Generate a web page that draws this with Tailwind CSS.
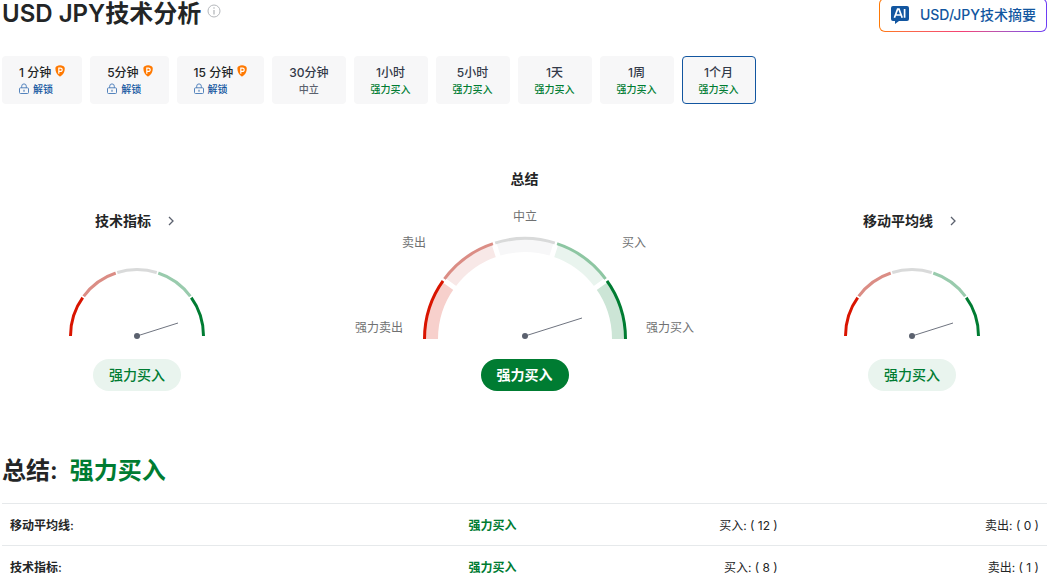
<!DOCTYPE html>
<html lang="zh-CN">
<head>
<meta charset="utf-8">
<meta name="viewport" content="width=device-width, initial-scale=1">
<title>USD JPY技术分析</title>
<script src="https://cdn.jsdelivr.net/npm/@tailwindcss/browser@4"></script>
</head>
<body class="h-screen overflow-hidden bg-white font-['Inter','Noto_Sans_CJK_SC',sans-serif] text-[#232526]">
<svg class="hidden" aria-hidden="true">
  <symbol id="premium" viewBox="0 0 10 12">
    <path d="M1.6 1.2Q5-.6 8.6 1.2Q9.6 1.7 9.7 3Q10.2 8.4 5.2 11.4Q4.8 11.6 4.4 11.3Q.2 8.2.4 3Q.5 1.7 1.6 1.2Z" fill="#ff7901"/>
    <path d="M3.8 8.8V3.2H5.4Q7.2 3.2 7.2 4.8T5.4 6.4H3.8" fill="none" stroke="#fff" stroke-width="1.2"/>
  </symbol>
  <symbol id="lock" viewBox="0 0 10 12">
    <path d="M2.7 5V3.2a2.3 2.3 0 0 1 4.6 0V5" fill="none" stroke="#5584bd"/>
    <rect x=".5" y="4.8" width="9" height="5.7" rx="1" fill="none" stroke="#5584bd"/>
    <path d="M5 6.7v2" stroke="#5584bd" stroke-width="1.2"/>
  </symbol>
  <symbol id="chevron" viewBox="0 0 16 16">
    <path d="M6 4l4 4-4 4" fill="none" stroke="#5b616e" stroke-width="1.3"/>
  </symbol>
  <symbol id="gauge" viewBox="-68 -72 136 79">
    <g fill="none" stroke-width="3">
      <path d="M-66.5 0A66.5 66.5 0 0 1-53.8-39.1" stroke="#d91400"/>
      <path d="M-53.8-39.1A66.5 66.5 0 0 1-20.5-63.2" stroke="#db8d85"/>
      <path d="M-20.5-63.2A66.5 66.5 0 0 1 20.5-63.2" stroke="#d9dada"/>
      <path d="M20.5-63.2A66.5 66.5 0 0 1 53.8-39.1" stroke="#99cbad"/>
      <path d="M53.8-39.1A66.5 66.5 0 0 1 66.5 0" stroke="#007c32"/>
    </g>
    <path d="M-51-37L-57-41.4M-19.5-60L-21.6-66.6M19.5-60L21.6-66.6M51-37L57-41.4" stroke="#fff" stroke-width="1.6"/>
    <path d="M0 0L41-13" stroke="#6f7480"/>
    <circle r="3" fill="#5b616e"/>
  </symbol>
</svg>
<main class="pl-0.5 pr-1.5">
  <header class="flex h-8 items-start justify-between">
    <div class="flex items-start gap-1.5">
      <h1 class="text-2xl leading-7 font-semibold">USD JPY技术分析</h1>
      <svg class="mt-1 size-3.5" viewBox="0 0 14 14" fill="none" role="img" aria-label="信息"><circle cx="7" cy="7" r="6" stroke="#b5b8bc"/><path d="M7 6v4.5" stroke="#b5b8bc" stroke-width="1.3"/><circle cx="7" cy="4" r=".8" fill="#b5b8bc"/></svg>
    </div>
    <button class="-mt-0.5 h-[34px] rounded-md bg-linear-to-r from-[#ff7901] via-[#f43f75] to-[#6d3df5] p-px">
      <span class="flex h-8 items-center gap-2.5 rounded-[5px] bg-white px-2.5 text-sm font-medium text-[#1256a0]">
        <svg class="size-5" viewBox="0 0 20 20"><path d="M3 1H17Q19 1 19 3V14Q19 16 17 16H9L5 19V16H3Q1 16 1 14V3Q1 1 3 1Z" fill="#1256a0"/><path d="M4.4 12.8L7.6 4.2H9L12.2 12.8M5.5 10H11M14.6 4V12.8" fill="none" stroke="#fff" stroke-width="1.7"/></svg>
        USD/JPY技术摘要
      </span>
    </button>
  </header>

  <nav class="mt-6 flex gap-2 text-xs leading-4 font-medium text-[#333a49]" aria-label="时间周期">
    <button class="flex h-12 flex-col items-start rounded bg-[#f7f7f8] px-[17px] pt-[9px] text-[#232526]"><span class="flex gap-1">1 分钟<svg class="h-3 w-2.5"><use href="#premium"/></svg></span><span class="flex items-center gap-1 text-[10px] text-[#1256a0]"><svg class="h-3 w-2.5"><use href="#lock"/></svg>解锁</span></button>
    <button class="flex h-12 flex-col items-start rounded bg-[#f7f7f8] pt-[9px] pr-4 pl-[17px] text-[#232526]"><span class="flex gap-1">5分钟<svg class="h-3 w-2.5"><use href="#premium"/></svg></span><span class="flex items-center gap-1 text-[10px] text-[#1256a0]"><svg class="h-3 w-2.5"><use href="#lock"/></svg>解锁</span></button>
    <button class="flex h-12 flex-col items-start rounded bg-[#f7f7f8] px-[17px] pt-[9px] text-[#232526]"><span class="flex gap-1">15 分钟<svg class="h-3 w-2.5"><use href="#premium"/></svg></span><span class="flex items-center gap-1 text-[10px] text-[#1256a0]"><svg class="h-3 w-2.5"><use href="#lock"/></svg>解锁</span></button>
    <button class="flex h-12 flex-col items-center rounded bg-[#f7f7f8] px-[17px] pt-[9px]">30分钟<span class="text-[10px] text-[#5b616e]">中立</span></button>
    <button class="flex h-12 flex-col items-center rounded bg-[#f7f7f8] px-[17px] pt-[9px]">1小时<span class="text-[10px] text-[#007c32]">强力买入</span></button>
    <button class="flex h-12 flex-col items-center rounded bg-[#f7f7f8] px-[17px] pt-[9px]">5小时<span class="text-[10px] text-[#007c32]">强力买入</span></button>
    <button class="flex h-12 flex-col items-center rounded bg-[#f7f7f8] px-[17px] pt-[9px]">1天<span class="text-[10px] text-[#007c32]">强力买入</span></button>
    <button class="flex h-12 flex-col items-center rounded bg-[#f7f7f8] px-[17px] pt-[9px]">1周<span class="text-[10px] text-[#007c32]">强力买入</span></button>
    <button class="flex h-12 flex-col items-center rounded-sm border border-[#1256a0] bg-[#f7f7f8] px-4 pt-2" aria-pressed="true">1个月<span class="text-[10px] text-[#007c32]">强力买入</span></button>
  </nav>

  <section class="mt-[65px] grid grid-cols-[270px_1fr_270px] items-end text-sm leading-5">
    <div class="flex flex-col items-center">
      <a href="#indicators" class="flex items-center gap-3 font-semibold">技术指标<svg class="size-4"><use href="#chevron"/></svg></a>
      <svg class="mt-[33px] h-[79px] w-[136px]" role="img" aria-label="强力买入"><use href="#gauge"/></svg>
      <div class="mt-4 rounded-full bg-[#e9f4ee] px-4 py-1.5 font-medium text-[#007c32]">强力买入</div>
    </div>
    <div class="flex flex-col items-center">
      <h2 class="font-semibold">总结</h2>
      <svg class="mt-[19px] h-[135px] w-[340px]" viewBox="-170 -131 340 135">
        <g fill="none" stroke-width="13">
          <path d="M-93.5 0A93.5 93.5 0 0 1-75.6-55" stroke="#f7d0cc"/>
          <path d="M-75.6-55A93.5 93.5 0 0 1-28.9-88.9" stroke="#f8e8e7"/>
          <path d="M-28.9-88.9A93.5 93.5 0 0 1 28.9-88.9" stroke="#f7f7f8"/>
          <path d="M28.9-88.9A93.5 93.5 0 0 1 75.6-55" stroke="#e9f4ee"/>
          <path d="M75.6-55A93.5 93.5 0 0 1 93.5 0" stroke="#cce5d6"/>
        </g>
        <path d="M-69.5-50.5L-81-58.8M-26.5-81.5L-31-95.5M26.5-81.5L31-95.5M69.5-50.5L81-58.8" stroke="#fff" stroke-width="5"/>
        <g fill="none" stroke-width="3">
          <path d="M-100.5 0A100.5 100.5 0 0 1-81.3-59.1" stroke="#d91400"/>
          <path d="M-81.3-59.1A100.5 100.5 0 0 1-31.1-95.6" stroke="#db8d85"/>
          <path d="M-31.1-95.6A100.5 100.5 0 0 1 31.1-95.6" stroke="#d9dada"/>
          <path d="M31.1-95.6A100.5 100.5 0 0 1 81.3-59.1" stroke="#8dc6a2"/>
          <path d="M81.3-59.1A100.5 100.5 0 0 1 100.5 0" stroke="#007c32"/>
        </g>
        <path d="M-78-56.7L-84-61M-29.5-91L-32-99M29.5-91L32-99M78-56.7L84-61" stroke="#fff" stroke-width="2.4"/>
        <path d="M0-3L57-21" stroke="#6f7480"/>
        <circle cy="-3" r="3" fill="#5b616e"/>
        <g class="text-xs" fill="#707172" text-anchor="middle">
          <text x="-146" y="-7">强力卖出</text>
          <text x="-111" y="-92">卖出</text>
          <text x="0" y="-118">中立</text>
          <text x="109" y="-92">买入</text>
          <text x="145" y="-7">强力买入</text>
        </g>
      </svg>
      <div class="mt-4 rounded-full bg-[#007c32] px-4 py-1.5 font-bold text-white">强力买入</div>
    </div>
    <div class="flex flex-col items-center">
      <a href="#averages" class="flex items-center gap-3 font-semibold">移动平均线<svg class="size-4"><use href="#chevron"/></svg></a>
      <svg class="mt-[33px] h-[79px] w-[136px]" role="img" aria-label="强力买入"><use href="#gauge"/></svg>
      <div class="mt-4 rounded-full bg-[#e9f4ee] px-4 py-1.5 font-medium text-[#007c32]">强力买入</div>
    </div>
  </section>

  <h2 class="mt-16 flex gap-3 text-2xl leading-8 font-semibold"><span>总结:</span><span class="text-[#007c32]">强力买入</span></h2>

  <table class="mt-4 w-full table-fixed border-collapse text-xs leading-4">
    <tbody>
      <tr id="averages" class="h-[42px] border-t border-[#e6e9eb]">
        <th scope="row" class="px-2 pt-0.5 text-left font-semibold">移动平均线:</th>
        <td class="px-2 pt-0.5 text-right font-semibold text-[#007c32]">强力买入</td>
        <td class="px-2 pt-0.5 text-right">买入: ( 12 )</td>
        <td class="px-2 pt-0.5 text-right">卖出: ( 0 )</td>
      </tr>
      <tr id="indicators" class="h-[42px] border-t border-[#e6e9eb]">
        <th scope="row" class="px-2 pt-0.5 text-left font-semibold">技术指标:</th>
        <td class="px-2 pt-0.5 text-right font-semibold text-[#007c32]">强力买入</td>
        <td class="px-2 pt-0.5 text-right">买入: ( 8 )</td>
        <td class="px-2 pt-0.5 text-right">卖出: ( 1 )</td>
      </tr>
    </tbody>
  </table>
</main>
</body>
</html>
